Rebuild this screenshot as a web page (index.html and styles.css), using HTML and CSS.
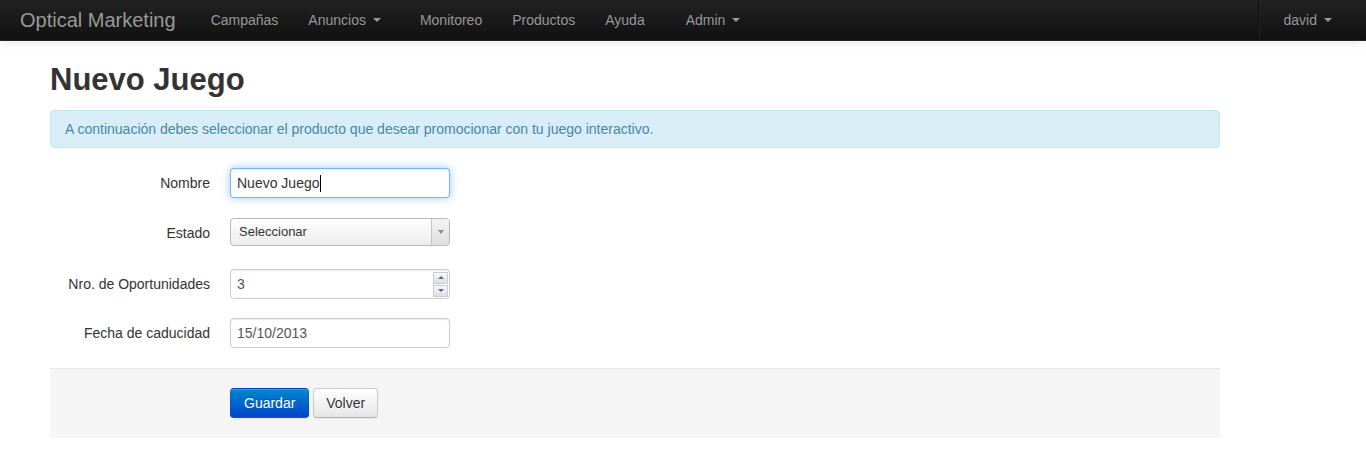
FILE: index.html
```html
<!DOCTYPE html>
<html lang="es">
<head>
<meta charset="utf-8">
<title>Nuevo Juego - Optical Marketing</title>
<link rel="stylesheet" href="styles.css">
</head>
<body>
<header class="navbar">
  <a class="brand" href="#">Optical Marketing</a>
  <ul class="nav">
    <li><a href="#">Campañas</a></li>
    <li><a href="#">Anuncios<b class="caret"></b></a></li>
    <li class="after-dropdown"><a href="#">Monitoreo</a></li>
    <li><a href="#">Productos</a></li>
    <li><a href="#">Ayuda</a></li>
    <li class="before-dropdown"><a href="#">Admin<b class="caret"></b></a></li>
  </ul>
  <ul class="nav nav-right">
    <li class="divider-vertical"></li>
    <li><a href="#">david<b class="caret"></b></a></li>
  </ul>
</header>

<main class="page">
  <h2 class="title">Nuevo Juego</h2>
  <div class="alert">A continuación debes seleccionar el producto que desear promocionar con tu juego interactivo.</div>

  <form class="form-horizontal">
    <div class="control-group">
      <label class="control-label">Nombre</label>
      <div class="input focused"><span class="value dark">Nuevo Juego</span><span class="text-caret"></span></div>
    </div>
    <div class="control-group select-group">
      <label class="control-label">Estado</label>
      <div class="select"><span class="select-text">Seleccionar</span><span class="select-arrow"><i class="tri-down"></i></span></div>
    </div>
    <div class="control-group number-group">
      <label class="control-label">Nro. de Oportunidades</label>
      <div class="input number"><span class="value">3</span>
        <span class="spinner"><span class="spin"><i class="tri-up small"></i></span><span class="spin"><i class="tri-down small"></i></span></span>
      </div>
    </div>
    <div class="control-group">
      <label class="control-label">Fecha de caducidad</label>
      <div class="input"><span class="value">15/10/2013</span></div>
    </div>
    <div class="form-actions">
      <button type="button" class="btn btn-primary">Guardar</button>
      <button type="button" class="btn">Volver</button>
    </div>
  </form>
</main>
</body>
</html>
```

FILE: styles.css
```css
* { box-sizing: border-box; }

body {
  margin: 0;
  font-family: "Liberation Sans", Arial, sans-serif;
  font-size: 14px;
  line-height: 20px;
  color: #333;
  background: #fff;
}

/* Navbar */
.navbar {
  display: flex;
  align-items: stretch;
  height: 41px;
  background: linear-gradient(to bottom, #222222, #111111);
  border-bottom: 1px solid #252525;
  box-shadow: 0 1px 10px rgba(0,0,0,.1);
}
.brand {
  padding: 10px 20px;
  font-size: 20px;
  line-height: 20px;
  color: #999;
  text-decoration: none;
}
.nav {
  display: flex;
  margin: 0;
  padding: 0;
  list-style: none;
}
.nav a {
  display: block;
  padding: 10px 15px;
  line-height: 20px;
  color: #999;
  text-decoration: none;
  text-shadow: 0 -1px 0 rgba(0,0,0,.25);
}
.nav .after-dropdown { margin-left: 9px; }
.nav .before-dropdown { margin-left: 11px; }
.nav-right { margin-left: auto; padding-right: 19px; }
.divider-vertical {
  width: 2px;
  height: 40px;
  margin: 0 9px 0 0;
  border-left: 1px solid #111;
  border-right: 1px solid #222;
}
.caret {
  display: inline-block;
  width: 0;
  height: 0;
  margin-left: 7px;
  vertical-align: middle;
  border-top: 4px solid #999;
  border-left: 4px solid transparent;
  border-right: 4px solid transparent;
  position: relative;
  top: -1px;
}

/* Page */
.page {
  width: 1170px;
  margin-left: 50px;
}
.title {
  margin: 19px 0 10px;
  font-size: 31px;
  line-height: 40px;
  font-weight: bold;
  color: #333;
}
.alert {
  padding: 8px 35px 8px 14px;
  margin-bottom: 20px;
  background: #d9edf7;
  border: 1px solid #bce8f1;
  border-radius: 4px;
  color: #3a87ad;
  text-shadow: 0 1px 0 rgba(255,255,255,.5);
}

/* Form */
.form-horizontal { margin: 0; }
.control-group {
  display: flex;
  align-items: flex-start;
  min-height: 30px;
  margin-bottom: 20px;
}
.select-group { min-height: 31px; }
.number-group { margin-bottom: 19px; }
.control-label {
  width: 160px;
  margin-right: 20px;
  padding-top: 5px;
  text-align: right;
  color: #333;
}
.input {
  display: flex;
  align-items: center;
  width: 220px;
  height: 30px;
  padding: 4px 6px;
  border: 1px solid #ccc;
  border-radius: 4px;
  background: #fff;
  box-shadow: inset 0 1px 1px rgba(0,0,0,.075);
  color: #555;
}
.input.focused {
  border-color: rgba(82,168,236,.8);
  box-shadow: inset 0 1px 1px rgba(0,0,0,.075), 0 0 8px rgba(82,168,236,.6);
}
.value { white-space: nowrap; }
.value.dark { color: #333; }
.text-caret {
  display: inline-block;
  width: 1px;
  height: 17px;
  background: #000;
}
.input.number { padding-right: 1px; }
.input.number .value { flex: 1; }
.spinner {
  display: flex;
  flex-direction: column;
  gap: 1px;
  width: 15px;
}
.spin {
  display: flex;
  align-items: center;
  justify-content: center;
  height: 12px;
  border: 1px solid #c9ccd2;
  background: linear-gradient(to bottom, #f7f7f7, #dcdfe3);
}

.select {
  display: flex;
  align-items: stretch;
  width: 220px;
  height: 28px;
  border: 1px solid #b9b9b9;
  border-radius: 4px;
  background: linear-gradient(to bottom, #ffffff, #ececec);
  color: #333;
  overflow: hidden;
}
.select-text {
  flex: 1;
  padding: 0 8px;
  font-size: 13px;
  line-height: 26px;
}
.select-arrow {
  display: flex;
  align-items: center;
  justify-content: center;
  width: 18px;
  border-left: 1px solid #c6c6c6;
  background: linear-gradient(to bottom, #f4f4f4, #dedede);
}
.tri-down, .tri-up {
  display: block;
  width: 0;
  height: 0;
  border-left: 3.5px solid transparent;
  border-right: 3.5px solid transparent;
}
.tri-down { border-top: 4px solid #8a8a8a; }
.tri-up { border-bottom: 4px solid #8a8a8a; }
.tri-up.small { border-width: 0 3px 3px; border-bottom-color: #4d6aa0; border-left-color: transparent; border-right-color: transparent; border-style: solid; }
.tri-down.small { border-width: 3px 3px 0; border-top-color: #4d6aa0; border-left-color: transparent; border-right-color: transparent; border-style: solid; }

.form-actions {
  padding: 19px 20px 20px 180px;
  background: #f5f5f5;
  border-top: 1px solid #e5e5e5;
}
.btn {
  display: inline-block;
  padding: 4px 12px;
  margin: 0;
  font-family: inherit;
  font-size: 14px;
  line-height: 20px;
  color: #333;
  text-shadow: 0 1px 1px rgba(255,255,255,.75);
  background: linear-gradient(to bottom, #ffffff, #e6e6e6);
  border: 1px solid #cccccc;
  border-bottom-color: #b3b3b3;
  border-radius: 4px;
  box-shadow: inset 0 1px 0 rgba(255,255,255,.2), 0 1px 2px rgba(0,0,0,.05);
  cursor: pointer;
}
.btn-primary {
  padding: 4px 13px;
  color: #fff;
  text-shadow: 0 -1px 0 rgba(0,0,0,.25);
  background: linear-gradient(to bottom, #0088cc, #0044cc);
  border-color: rgba(0,0,0,.1) rgba(0,0,0,.1) rgba(0,0,0,.25);
}
```
